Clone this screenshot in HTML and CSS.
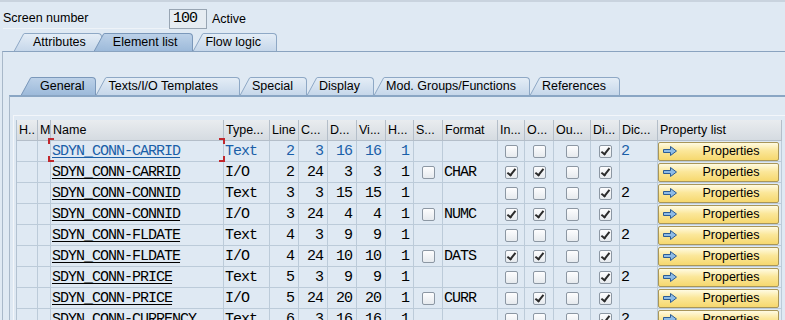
FILE: index.html
```html
<!DOCTYPE html>
<html>
<head>
<meta charset="utf-8">
<title>Element list</title>
<link rel="stylesheet" href="styles.css">
</head>
<body>
<svg class="defs" width="0" height="0" aria-hidden="true">
  <defs>
    <linearGradient id="gIn" x1="0" y1="0" x2="0" y2="1">
      <stop offset="0" stop-color="#e4edf6"/>
      <stop offset="1" stop-color="#c6d7ea"/>
    </linearGradient>
    <linearGradient id="gAct" x1="0" y1="0" x2="0" y2="1">
      <stop offset="0" stop-color="#bcd1e8"/>
      <stop offset="1" stop-color="#9dbada"/>
    </linearGradient>
  </defs>
</svg>
<div class="page">
  <div class="screen-row">
    <span class="lbl">Screen number</span>
    <span class="field">100</span>
    <span class="status">Active</span>
  </div>

  <div class="tabs main-tabs">
    <div class="tab first"><svg class="wedge" viewBox="0 0 11 18" width="11" height="18"><path class="wf" d="M0 18 L9.5 0.5 L11 0 V18 Z"/><path class="ws" d="M0.3 18 L9.6 0.9 Q10 0.5 11 0.5"/></svg><span class="tl">Attributes</span></div>
    <div class="tab active lift"><svg class="wedge" viewBox="0 0 11 18" width="11" height="18"><path class="wf" d="M0 18 L9.5 0.5 L11 0 V18 Z"/><path class="ws" d="M0.3 18 L9.6 0.9 Q10 0.5 11 0.5"/></svg><span class="tl">Element list</span></div>
    <div class="tab"><svg class="wedge" viewBox="0 0 11 18" width="11" height="18"><path class="wf" d="M0 18 L9.5 0.5 L11 0 V18 Z"/><path class="ws" d="M0.3 18 L9.6 0.9 Q10 0.5 11 0.5"/></svg><span class="tl">Flow logic</span></div>
  </div>

  <div class="main-panel">
    <div class="tabs sub-tabs">
      <div class="tab first active"><svg class="wedge" viewBox="0 0 11 18" width="11" height="18"><path class="wf" d="M0 18 L9.5 0.5 L11 0 V18 Z"/><path class="ws" d="M0.3 18 L9.6 0.9 Q10 0.5 11 0.5"/></svg><span class="tl">General</span></div>
      <div class="tab wide"><svg class="wedge" viewBox="0 0 11 18" width="11" height="18"><path class="wf" d="M0 18 L9.5 0.5 L11 0 V18 Z"/><path class="ws" d="M0.3 18 L9.6 0.9 Q10 0.5 11 0.5"/></svg><span class="tl">Texts/I/O Templates</span></div>
      <div class="tab"><svg class="wedge" viewBox="0 0 11 18" width="11" height="18"><path class="wf" d="M0 18 L9.5 0.5 L11 0 V18 Z"/><path class="ws" d="M0.3 18 L9.6 0.9 Q10 0.5 11 0.5"/></svg><span class="tl">Special</span></div>
      <div class="tab"><svg class="wedge" viewBox="0 0 11 18" width="11" height="18"><path class="wf" d="M0 18 L9.5 0.5 L11 0 V18 Z"/><path class="ws" d="M0.3 18 L9.6 0.9 Q10 0.5 11 0.5"/></svg><span class="tl">Display</span></div>
      <div class="tab"><svg class="wedge" viewBox="0 0 11 18" width="11" height="18"><path class="wf" d="M0 18 L9.5 0.5 L11 0 V18 Z"/><path class="ws" d="M0.3 18 L9.6 0.9 Q10 0.5 11 0.5"/></svg><span class="tl">Mod. Groups/Functions</span></div>
      <div class="tab"><svg class="wedge" viewBox="0 0 11 18" width="11" height="18"><path class="wf" d="M0 18 L9.5 0.5 L11 0 V18 Z"/><path class="ws" d="M0.3 18 L9.6 0.9 Q10 0.5 11 0.5"/></svg><span class="tl">References</span></div>
    </div>

    <div class="sub-panel">
      <div class="frame">
        <div class="grid">
          <div class="c h">H..</div><div class="c h">M</div><div class="c h">Name</div><div class="c h">Type...</div><div class="c h">Line</div><div class="c h">C...</div><div class="c h">D...</div><div class="c h">Vi...</div><div class="c h">H...</div><div class="c h">S...</div><div class="c h">Format</div><div class="c h">In...</div><div class="c h">O...</div><div class="c h">Ou...</div><div class="c h">Di...</div><div class="c h">Dic...</div><div class="c h">Property list</div>

          <!-- row 1 (current) -->
          <div class="c"></div><div class="c"></div>
          <div class="c m cur focus"><span class="u">SDYN_CONN-CARRID</span></div>
          <div class="c m cur">Text</div>
          <div class="c m r cur">2</div><div class="c m r cur">3</div><div class="c m r cur">16</div><div class="c m r cur">16</div><div class="c m r cur">1</div>
          <div class="c"></div><div class="c m"></div>
          <div class="c ctr"><span class="chk"></span></div><div class="c ctr"><span class="chk"></span></div><div class="c ctr"><span class="chk"></span></div><div class="c ctr"><span class="chk on"></span></div>
          <div class="c m cur">2</div>
          <div class="c p"><div class="btn"><svg class="arr" viewBox="0 0 16 12" width="16" height="12"><path d="M1.5 4.5 H8.5 V1.5 L14.5 6 L8.5 10.5 V7.5 H1.5 Z"/></svg><span>Properties</span></div></div>

          <!-- row 2 -->
          <div class="c"></div><div class="c"></div>
          <div class="c m"><span class="u">SDYN_CONN-CARRID</span></div>
          <div class="c m">I/O</div>
          <div class="c m r">2</div><div class="c m r">24</div><div class="c m r">3</div><div class="c m r">3</div><div class="c m r">1</div>
          <div class="c ctr"><span class="chk"></span></div><div class="c m">CHAR</div>
          <div class="c ctr"><span class="chk on"></span></div><div class="c ctr"><span class="chk on"></span></div><div class="c ctr"><span class="chk"></span></div><div class="c ctr"><span class="chk on"></span></div>
          <div class="c m"></div>
          <div class="c p"><div class="btn"><svg class="arr" viewBox="0 0 16 12" width="16" height="12"><path d="M1.5 4.5 H8.5 V1.5 L14.5 6 L8.5 10.5 V7.5 H1.5 Z"/></svg><span>Properties</span></div></div>

          <!-- row 3 -->
          <div class="c"></div><div class="c"></div>
          <div class="c m"><span class="u">SDYN_CONN-CONNID</span></div>
          <div class="c m">Text</div>
          <div class="c m r">3</div><div class="c m r">3</div><div class="c m r">15</div><div class="c m r">15</div><div class="c m r">1</div>
          <div class="c"></div><div class="c m"></div>
          <div class="c ctr"><span class="chk"></span></div><div class="c ctr"><span class="chk"></span></div><div class="c ctr"><span class="chk"></span></div><div class="c ctr"><span class="chk on"></span></div>
          <div class="c m">2</div>
          <div class="c p"><div class="btn"><svg class="arr" viewBox="0 0 16 12" width="16" height="12"><path d="M1.5 4.5 H8.5 V1.5 L14.5 6 L8.5 10.5 V7.5 H1.5 Z"/></svg><span>Properties</span></div></div>

          <!-- row 4 -->
          <div class="c"></div><div class="c"></div>
          <div class="c m"><span class="u">SDYN_CONN-CONNID</span></div>
          <div class="c m">I/O</div>
          <div class="c m r">3</div><div class="c m r">24</div><div class="c m r">4</div><div class="c m r">4</div><div class="c m r">1</div>
          <div class="c ctr"><span class="chk"></span></div><div class="c m">NUMC</div>
          <div class="c ctr"><span class="chk on"></span></div><div class="c ctr"><span class="chk on"></span></div><div class="c ctr"><span class="chk"></span></div><div class="c ctr"><span class="chk on"></span></div>
          <div class="c m"></div>
          <div class="c p"><div class="btn"><svg class="arr" viewBox="0 0 16 12" width="16" height="12"><path d="M1.5 4.5 H8.5 V1.5 L14.5 6 L8.5 10.5 V7.5 H1.5 Z"/></svg><span>Properties</span></div></div>

          <!-- row 5 -->
          <div class="c"></div><div class="c"></div>
          <div class="c m"><span class="u">SDYN_CONN-FLDATE</span></div>
          <div class="c m">Text</div>
          <div class="c m r">4</div><div class="c m r">3</div><div class="c m r">9</div><div class="c m r">9</div><div class="c m r">1</div>
          <div class="c"></div><div class="c m"></div>
          <div class="c ctr"><span class="chk"></span></div><div class="c ctr"><span class="chk"></span></div><div class="c ctr"><span class="chk"></span></div><div class="c ctr"><span class="chk on"></span></div>
          <div class="c m">2</div>
          <div class="c p"><div class="btn"><svg class="arr" viewBox="0 0 16 12" width="16" height="12"><path d="M1.5 4.5 H8.5 V1.5 L14.5 6 L8.5 10.5 V7.5 H1.5 Z"/></svg><span>Properties</span></div></div>

          <!-- row 6 -->
          <div class="c"></div><div class="c"></div>
          <div class="c m"><span class="u">SDYN_CONN-FLDATE</span></div>
          <div class="c m">I/O</div>
          <div class="c m r">4</div><div class="c m r">24</div><div class="c m r">10</div><div class="c m r">10</div><div class="c m r">1</div>
          <div class="c ctr"><span class="chk"></span></div><div class="c m">DATS</div>
          <div class="c ctr"><span class="chk on"></span></div><div class="c ctr"><span class="chk on"></span></div><div class="c ctr"><span class="chk"></span></div><div class="c ctr"><span class="chk on"></span></div>
          <div class="c m"></div>
          <div class="c p"><div class="btn"><svg class="arr" viewBox="0 0 16 12" width="16" height="12"><path d="M1.5 4.5 H8.5 V1.5 L14.5 6 L8.5 10.5 V7.5 H1.5 Z"/></svg><span>Properties</span></div></div>

          <!-- row 7 -->
          <div class="c"></div><div class="c"></div>
          <div class="c m"><span class="u">SDYN_CONN-PRICE</span></div>
          <div class="c m">Text</div>
          <div class="c m r">5</div><div class="c m r">3</div><div class="c m r">9</div><div class="c m r">9</div><div class="c m r">1</div>
          <div class="c"></div><div class="c m"></div>
          <div class="c ctr"><span class="chk"></span></div><div class="c ctr"><span class="chk"></span></div><div class="c ctr"><span class="chk"></span></div><div class="c ctr"><span class="chk on"></span></div>
          <div class="c m">2</div>
          <div class="c p"><div class="btn"><svg class="arr" viewBox="0 0 16 12" width="16" height="12"><path d="M1.5 4.5 H8.5 V1.5 L14.5 6 L8.5 10.5 V7.5 H1.5 Z"/></svg><span>Properties</span></div></div>

          <!-- row 8 -->
          <div class="c"></div><div class="c"></div>
          <div class="c m"><span class="u">SDYN_CONN-PRICE</span></div>
          <div class="c m">I/O</div>
          <div class="c m r">5</div><div class="c m r">24</div><div class="c m r">20</div><div class="c m r">20</div><div class="c m r">1</div>
          <div class="c ctr"><span class="chk"></span></div><div class="c m">CURR</div>
          <div class="c ctr"><span class="chk"></span></div><div class="c ctr"><span class="chk on"></span></div><div class="c ctr"><span class="chk"></span></div><div class="c ctr"><span class="chk on"></span></div>
          <div class="c m"></div>
          <div class="c p"><div class="btn"><svg class="arr" viewBox="0 0 16 12" width="16" height="12"><path d="M1.5 4.5 H8.5 V1.5 L14.5 6 L8.5 10.5 V7.5 H1.5 Z"/></svg><span>Properties</span></div></div>

          <!-- row 9 -->
          <div class="c"></div><div class="c"></div>
          <div class="c m"><span class="u">SDYN_CONN-CURRENCY</span></div>
          <div class="c m">Text</div>
          <div class="c m r">6</div><div class="c m r">3</div><div class="c m r">16</div><div class="c m r">16</div><div class="c m r">1</div>
          <div class="c"></div><div class="c m"></div>
          <div class="c ctr"><span class="chk"></span></div><div class="c ctr"><span class="chk"></span></div><div class="c ctr"><span class="chk"></span></div><div class="c ctr"><span class="chk on"></span></div>
          <div class="c m">2</div>
          <div class="c p"><div class="btn"><svg class="arr" viewBox="0 0 16 12" width="16" height="12"><path d="M1.5 4.5 H8.5 V1.5 L14.5 6 L8.5 10.5 V7.5 H1.5 Z"/></svg><span>Properties</span></div></div>
        </div>
      </div>
    </div>
  </div>
</div>
</body>
</html>
```

FILE: styles.css
```css
* { box-sizing: border-box; }
html, body { margin: 0; padding: 0; }
body {
  width: 785px;
  height: 320px;
  overflow: hidden;
  background: #dfe9f3;
  font-family: "Liberation Sans", Arial, sans-serif;
  font-size: 12.5px;
  color: #000;
}
.defs { position: absolute; width: 0; height: 0; }

.page { border-top: 2px solid #c9d3de; padding-top: 7px; }

/* screen number row */
.screen-row { display: flex; align-items: center; height: 20px; padding-left: 3px; }
.lbl { width: 166px; height: 20px; line-height: 19px; border-bottom: 1px solid #eef3f8; }
.field {
  width: 38px; height: 20px;
  border: 1px solid #98a5b3;
  background: #e6ecf2;
  font-family: "Liberation Mono", monospace;
  font-size: 15px; letter-spacing: -1px;
  line-height: 18px; padding-left: 3px;
}
.status { margin-left: 5px; }

/* tabs */
.tabs { display: flex; height: 18px; }
.main-tabs { margin-top: 4px; padding-left: 14px; }
.sub-tabs { margin-top: 25px; padding-left: 18px; }
.tab { display: flex; height: 18px; }
.lift { margin-left: -8px; position: relative; z-index: 1; }
.wedge { display: block; flex: none; }
.wf { fill: url(#gIn); }
.ws { fill: none; stroke: #8ea8c5; stroke-width: 1; }
.active .wf { fill: url(#gAct); }
.active .ws { stroke: #7b98ba; }
.tl {
  height: 18px;
  border-top: 1px solid #8ea8c5;
  border-right: 1px solid #8ea8c5;
  border-top-right-radius: 4px;
  background: linear-gradient(#e4edf6, #c6d7ea);
  padding: 0 13px 0 1px;
  line-height: 17px;
  white-space: nowrap;
}
.main-tabs .tl { padding-right: 15px; }
.first .tl, .active .tl { padding-left: 8px; }
.sub-tabs .first .tl { padding-right: 11px; }
.wide .tl { padding-right: 21px; }
.active .tl {
  background: linear-gradient(#bcd1e8, #9dbada);
  border-color: #7b98ba;
}

/* panels */
.main-panel {
  margin-left: 2px;
  border-left: 1px solid #a8b8c9;
  border-top: 1px solid #8aa3bf;
}
.sub-panel {
  margin-left: 6px;
  border-left: 1px solid #a8b8c9;
  border-top: 2px solid #8aa6c4;
  padding: 18px 0 0 3px;
}
.frame {
  border-left: 1px solid #f3f6fa;
  border-top: 1px solid #f3f6fa;
  padding: 4px 0 0 2px;
}

/* grid table */
.grid {
  display: grid;
  grid-template-columns: 21px 13px 173px 46px 29px 29px 29px 29px 28px 29px 55px 27px 29px 37px 29px 38px 124px;
  border-left: 1px solid #b3c2d1;
  width: 767px;
}
.c {
  height: 21px;
  border-right: 1px solid #bccbd9;
  border-bottom: 1px solid #bccbd9;
  display: flex;
  align-items: center;
  white-space: nowrap;
  overflow: hidden;
  padding: 0 1px;
}
.h {
  background: linear-gradient(#e9ecef, #d5dbe1);
  border-right-color: #b4bec9;
  border-bottom-color: #b4bec9;
  padding-left: 2px;
}
.m {
  font-family: "Liberation Mono", monospace;
  font-size: 15px;
  letter-spacing: -1px;
  padding-top: 1px;
}
.r { justify-content: flex-end; padding-right: 4px; }
.ctr { justify-content: center; }
.cur { color: #1a5fa8; }
.u { text-decoration: underline; text-underline-offset: 2px; text-decoration-thickness: 1px; }

.focus { position: relative; overflow: visible; }
.focus::after {
  content: "";
  position: absolute;
  left: -3px; top: -3px; right: -2px; bottom: -1px;
  background:
    linear-gradient(#c1272d, #c1272d) left top / 6px 2px,
    linear-gradient(#c1272d, #c1272d) left top / 2px 6px,
    linear-gradient(#c1272d, #c1272d) right top / 6px 2px,
    linear-gradient(#c1272d, #c1272d) right top / 2px 6px,
    linear-gradient(#c1272d, #c1272d) left bottom / 6px 2px,
    linear-gradient(#c1272d, #c1272d) left bottom / 2px 6px,
    linear-gradient(#c1272d, #c1272d) right bottom / 6px 2px,
    linear-gradient(#c1272d, #c1272d) right bottom / 2px 6px;
  background-repeat: no-repeat;
}

/* checkbox */
.chk {
  position: relative;
  display: block;
  width: 13px; height: 13px;
  border: 1px solid #8c97a3;
  border-radius: 2px;
  background: linear-gradient(#fdfdfe, #e6eaee);
}
.chk.on::after {
  content: "";
  position: absolute;
  left: 3.5px; top: 0.5px;
  width: 3px; height: 7px;
  border: solid #2b2b2b;
  border-width: 0 2px 2px 0;
  transform: rotate(38deg);
}

/* property button */
.p { padding: 0 2px 0 0; }
.btn {
  flex: 1;
  height: 19px;
  display: flex;
  align-items: center;
  border: 1px solid #a89659;
  border-radius: 2px;
  background: linear-gradient(#fffbe2, #fbe79a 45%, #f6d86e);
  padding-left: 3px;
}
.arr { display: block; flex: none; }
.arr path { fill: #8dbbe6; stroke: #2c5c95; stroke-width: 1; }
.btn span { flex: 1; text-align: center; padding-left: 6px; }
```
